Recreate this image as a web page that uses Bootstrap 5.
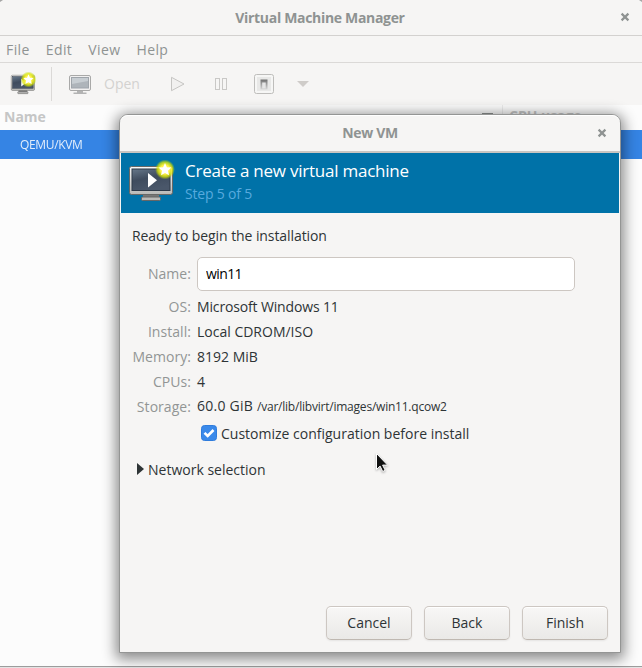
<!DOCTYPE html>
<html lang="en">
<head>
<meta charset="utf-8">
<meta name="viewport" content="width=device-width, initial-scale=1">
<title>Virtual Machine Manager</title>
<link href="https://cdn.jsdelivr.net/npm/bootstrap@5.3.0/dist/css/bootstrap.min.css" rel="stylesheet">
<style>
  html, body { height: 100%; }
  body { font: 14px/20px "Open Sans", "Noto Sans", sans-serif; color: #2e3436; background: #e4e4e4; overflow: hidden; }
  .dim { color: #929595; }
  .chrome { background: #f6f5f4; }
  .main-window { height: 667px; border-bottom: 1px solid #9c9c9c; background: #fcfcfc; }
  .title-strip { height: 36px; border-bottom: 1px solid #d3d1cf; }
  .win-title { font-weight: 700; letter-spacing: -.32px; color: #8f9392; }
  .title-strip .win-title { margin-right: 2px; }
  .close-x { width: 10px; height: 10px; }
  .close-main { right: 12px; top: 12px; }
  .close-dialog { right: 13px; top: 13px; }
  .menu-strip { height: 27px; border-bottom: 1px solid #dbd9d7; padding: 0 6px; gap: 16px; }
  .menu-strip .nav-link { padding: 0; color: #8f9392; line-height: 27px; letter-spacing: .4px; }
  .tool-strip { height: 42px; }
  .tool-sep { width: 1px; height: 34px; background: #dbd9d7; margin: 0 16px 0 11px; }
  .tool-open { color: #d3d2d0; margin-left: 12px; }
  .tool-play { margin-left: 29px; }
  .tool-pause { margin-left: 28px; }
  .tool-power { margin-left: 25px; }
  .tool-more { margin-left: 23px; }
  .tree-head { height: 25px; color: #c5c6c6; font-weight: 700; line-height: 24px; }
  .head-cpu { border-left: 1px solid #ececec; width: 140px; padding-left: 6px; line-height: 22px; }
  .tree-row { height: 29px; background: #3584e4; color: #fff; font-size: 12px; line-height: 29px; padding-left: 20px; letter-spacing: -.35px; }
  .tree-row span { opacity: .85; }

  .dialog-window { left: 119px; top: 114px; width: 502px; height: 539px; border: 1px solid #949594; border-radius: 9px 9px 0 0;
    box-shadow: 0 3px 14px 3px rgba(0,0,0,.46); }
  .dialog-title { height: 38px; border-bottom: 2px solid #c9c5c1; border-radius: 8px 8px 0 0; box-shadow: inset 0 1px #fff; }
  .banner { height: 60px; margin: 0 1px; background: #0072a8; color: #fff; }
  .banner-text { padding-top: 6px; }
  .banner h1 { font-size: 17px; line-height: 23px; font-weight: 400; margin: 0; letter-spacing: -.24px; }
  .banner p { margin: 0; color: #57aade; line-height: 24px; letter-spacing: -.2px; }
  .dialog-body { padding: 13px 12px 12px; }
  .lead-in { letter-spacing: -.08px; }
  .field-label { width: 59px; text-align: right; flex: none; white-space: nowrap; letter-spacing: .05px; }
  .field { height: 25px; gap: 6px; }
  .name-row { gap: 6px; margin: 11px 0 3px; }
  .name-field { width: 378px; height: 34px; padding: 0 8px 2px; border: 1px solid #cdc7c2; border-radius: 5px; font-size: 14px; letter-spacing: -.6px; color: #000; background: #fff; }
  .os-name { letter-spacing: -.15px; }
  .disk-size { letter-spacing: .25px; }
  .path { font-size: 12px; letter-spacing: -.22px; }
  .check-row { margin: 4px 0 0 69px; gap: 4px; height: 20px; }
  .check-row label { padding-top: 1px; }
  .check { width: 16px; height: 16px; margin: 0; border-radius: 3px; float: none; }
  .check:checked { background-color: #3a89ea; border-color: #2f7cdc; background-image: none; }
  .tick { left: 2px; top: 3px; pointer-events: none; }
  .net-row { margin: 17px 0 0 5px; gap: 4px; height: 20px; }
  .net-row svg { margin-top: -2px; }
  .btn-soft { width: 86px; height: 34px; padding: 0 0 2px; font-size: 14px; color: #2e3436; border: 1px solid #cdc7c2; border-bottom-color: #bfb8b1; border-radius: 5px;
    background: linear-gradient(#f8f7f6, #eae9e7); box-shadow: inset 0 1px #fff, 0 1px 2px rgba(0,0,0,.07); }
  .btn-row { gap: 12px; }
  .pointer { left: 375px; top: 452px; filter: drop-shadow(0 1px 1px rgba(0,0,0,.3)); }
  .corner { top: 0; width: 3px; height: 2px; background: #a5a5a5; }
  .corner-left { clip-path: polygon(0 0, 100% 0, 0 100%); }
  .corner-right { clip-path: polygon(0 0, 100% 0, 100% 100%); }
</style>
</head>
<body>
<main class="main-window d-flex flex-column">
  <header class="title-strip chrome d-flex align-items-center position-relative justify-content-center flex-shrink-0">
    <i class="corner corner-left position-absolute start-0"></i><i class="corner corner-right position-absolute end-0"></i>
    <span class="win-title">Virtual Machine Manager</span>
    <svg class="close-x close-main position-absolute" viewBox="0 0 10 10"><path d="M1.600 1.600l6.800 6.800M8.400 1.600L1.600 8.400" stroke="#8f9392" stroke-width="2.200"/></svg>
  </header>
  <nav class="menu-strip chrome nav flex-shrink-0">
    <a class="nav-link">File</a><a class="nav-link">Edit</a><a class="nav-link">View</a><a class="nav-link">Help</a>
  </nav>
  <div class="tool-strip chrome d-flex align-items-center flex-shrink-0">
    <svg class="ms-2" width="32" height="28" viewBox="0 0 32 28">
      <use href="#screen" transform="translate(3 5) scale(.54)"/><use href="#glow" transform="translate(20.500 9.500) scale(.8)"/>
    </svg>
    <div class="tool-sep"></div>
    <svg width="24" height="22" viewBox="0 0 24 22" opacity=".6">
      <rect x="1.500" y="2.500" width="21" height="15" rx="1.500" fill="#eee" stroke="#777"/><rect x="3.500" y="4.500" width="17" height="10.500" fill="#7f8995" stroke="#66717c"/><path d="M4 5h16v3L4 11z" fill="#a9b3bc"/><path d="M9 18h6v1.500h3.500v1.500h-13v-1.500H9z" fill="#888"/>
    </svg>
    <span class="tool-open">Open</span>
    <svg class="tool-play" width="17" height="18" viewBox="0 0 17 18"><path d="M2.500 2.300v13.400l12.500-6.700z" fill="#f1f0ef" stroke="#c6c5c3" stroke-linejoin="round"/></svg>
    <svg class="tool-pause" width="14" height="14" viewBox="0 0 14 14"><g fill="#f6f5f4" stroke="#c9c8c6"><rect x="1.500" y="1.500" width="4" height="11"/><rect x="8.500" y="1.500" width="4" height="11"/></g></svg>
    <svg class="tool-power" width="21" height="21" viewBox="0 0 21 21"><defs><linearGradient id="sw" x2="0" y2="1"><stop stop-color="#707070"/><stop offset="1" stop-color="#d8d8d8"/></linearGradient></defs><rect x="1.500" y=".5" width="19" height="19" rx="2" fill="#f6f6f5" stroke="#bebdbb"/><rect x="4" y="3" width="14" height="14" fill="#e8e8e7"/><rect x="7.500" y="5.500" width="7" height="10" fill="url(#sw)"/><rect x="9.200" y="8.500" width="3.500" height="6" fill="#e6e6e6"/></svg>
    <svg class="tool-more" width="12" height="6" viewBox="0 0 12 6"><path d="M0 0h12L6 6z" fill="#cfccc9"/></svg>
  </div>
  <div class="tree-head d-flex flex-shrink-0 justify-content-between">
    <span class="ms-1">Name</span>
    <span class="d-flex"><svg width="20" height="25" viewBox="0 0 20 25"><path d="M0 8.500h11L5.500 14z" fill="#8f9392"/><path d="M0 8.500h11" stroke="#8f9392"/></svg><span class="head-cpu">CPU usage</span></span>
  </div>
  <div class="tree-row flex-shrink-0"><span>QEMU/KVM</span></div>
</main>

<section class="dialog-window chrome position-absolute d-flex flex-column" role="dialog" aria-label="New VM">
  <header class="dialog-title d-flex align-items-center justify-content-center position-relative flex-shrink-0">
    <span class="win-title">New VM</span>
    <svg class="close-x close-dialog position-absolute" viewBox="0 0 10 10"><path d="M1.600 1.600l6.800 6.800M8.400 1.600L1.600 8.400" stroke="#8f9392" stroke-width="2.200"/></svg>
  </header>
  <div class="banner d-flex flex-shrink-0">
    <svg width="64" height="60" viewBox="0 0 64 60">
      <defs>
        <linearGradient id="glass" x2=".4" y2="1"><stop stop-color="#67788a"/><stop offset=".5" stop-color="#3f4c5e"/><stop offset="1" stop-color="#4a576a"/></linearGradient>
        <linearGradient id="metal" x2="0" y2="1"><stop stop-color="#fafafa"/><stop offset="1" stop-color="#b9b9b7"/></linearGradient>
        <radialGradient id="halo"><stop offset=".45" stop-color="#fff34a"/><stop offset=".75" stop-color="#dbe800" stop-opacity=".75"/><stop offset="1" stop-color="#b5d100" stop-opacity="0"/></radialGradient>
        <g id="screen">
          <path d="M14 28h16v4H14z" fill="#777"/><rect x="12.500" y="31" width="19" height="3.500" rx="1" fill="#b9b9b7" stroke="#666"/>
          <rect x=".5" y=".5" width="43" height="28" rx="2" fill="url(#metal)" stroke="#686866"/>
          <rect x="3" y="3" width="38" height="21.500" fill="url(#glass)" stroke="#2f3a49"/>
          <path d="M19 7v14.500l9-7.200z" fill="#fff"/>
        </g>
        <g id="glow"><circle r="10" fill="url(#halo)"/><path d="M0-6.500L1.900-2.300 6.400-1.900 3 1.200 4 5.700 0 3.400-4 5.700-3 1.200-6.400-1.900-1.900-2.300z" fill="#fff"/></g>
      </defs>
      <use href="#screen" x="8" y="13"/><use href="#glow" x="44" y="16.500"/>
    </svg>
    <div class="banner-text"><h1>Create a new virtual machine</h1><p>Step 5 of 5</p></div>
  </div>
  <div class="dialog-body flex-grow-1 d-flex flex-column">
    <div class="lead-in">Ready to begin the installation</div>
    <div class="name-row d-flex align-items-center"><label class="field-label dim" for="vm">Name:</label><input id="vm" class="name-field" value="win11"></div>
    <div class="field d-flex align-items-center"><span class="field-label dim">OS:</span><span class="os-name">Microsoft Windows 11</span></div>
    <div class="field d-flex align-items-center"><span class="field-label dim">Install:</span><span>Local CDROM/ISO</span></div>
    <div class="field d-flex align-items-center"><span class="field-label dim">Memory:</span><span>8192 MiB</span></div>
    <div class="field d-flex align-items-center"><span class="field-label dim">CPUs:</span><span>4</span></div>
    <div class="field d-flex align-items-center"><span class="field-label dim">Storage:</span><span><span class="disk-size">60.0 GiB </span><span class="path">/var/lib/libvirt/images/win11.qcow2</span></span></div>
    <div class="check-row d-flex align-items-center">
      <span class="position-relative d-flex"><input class="form-check-input check" type="checkbox" id="cust" checked>
        <svg class="tick position-absolute" width="12" height="10" viewBox="0 0 12 10"><path d="M1.500 4.800L4.700 8 10.500 2" fill="none" stroke="#fff" stroke-width="2.600"/></svg></span>
      <label for="cust">Customize configuration before install</label>
    </div>
    <div class="net-row d-flex align-items-center"><svg width="7" height="12" viewBox="0 0 7 12"><path d="M0 0l7 6-7 6z" fill="#2e3436"/></svg><span>Network selection</span></div>
    <footer class="btn-row d-flex justify-content-end mt-auto"><button class="btn btn-soft">Cancel</button><button class="btn btn-soft">Back</button><button class="btn btn-soft">Finish</button></footer>
  </div>
</section>
<svg class="pointer position-absolute" width="14" height="21" viewBox="0 0 14 21"><path d="M1.500 1.500v16l3.600-3.400 2.600 5.400 2.500-1.200-2.600-5.200h5z" fill="#111" stroke="#fff"/></svg>
<script src="https://cdn.jsdelivr.net/npm/bootstrap@5.3.0/dist/js/bootstrap.bundle.min.js"></script>
</body>
</html>
